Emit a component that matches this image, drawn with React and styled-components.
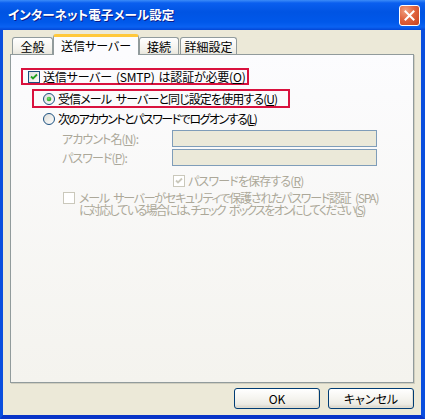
import React from 'react';
import styled, { createGlobalStyle } from 'styled-components';

const Global = createGlobalStyle`
  html, body { margin: 0; padding: 0; background: #ffffff; }
  body {
    font-family: "Noto Sans CJK JP", "Noto Sans", sans-serif;
    font-size: 12px;
    color: #000;
    font-feature-settings: "palt" 1;
  }
  #root { width: 425px; height: 419px; }
`;

const Window = styled.div`
  width: 425px;
  height: 419px;
  display: flex;
  flex-direction: column;
  overflow: hidden;
`;

const TitleBar = styled.div`
  flex: none;
  height: 30px;
  display: flex;
  align-items: center;
  justify-content: space-between;
  padding: 0 5px 0 8px;
  box-sizing: border-box;
  background: linear-gradient(
    to bottom,
    #3c8cf8 0px,
    #0a5fef 3px,
    #0054e3 12px,
    #0058ea 22px,
    #0a62f2 27px,
    #0346d6 30px
  );
`;

const Title = styled.span`
  color: #ffffff;
  font-weight: bold;
  font-size: 12.5px;
  letter-spacing: 0.1px;
  text-shadow: 1px 1px 0 #0a1c8c;
  line-height: 1;
`;

const CloseButton = styled.div`
  width: 21px;
  height: 21px;
  box-sizing: border-box;
  border: 1px solid #ffffff;
  border-radius: 3px;
  background: radial-gradient(circle at 30% 25%, #f0a080 0%, #e06540 45%, #c8401c 100%);
  display: flex;
  align-items: center;
  justify-content: center;
`;

const Frame = styled.div`
  flex: 1;
  display: flex;
  flex-direction: column;
  background: #ece9d8;
  border-left: 3px solid #0a4ede;
  border-right: 4px solid #0a4ede;
  border-bottom: 4px solid #0834c8;
  padding: 4px 7px 6px 7px;
  box-sizing: border-box;
`;

const TabStrip = styled.div`
  flex: none;
  height: 20px;
  display: flex;
  align-items: flex-end;
  padding-left: 2px;
`;

const Tab = styled.div`
  box-sizing: border-box;
  width: ${(p) => p.$w}px;
  height: ${(p) => (p.$active ? 21 : 17)}px;
  margin-left: ${(p) => p.$ml || 0}px;
  margin-bottom: ${(p) => (p.$active ? -1 : 0)}px;
  position: relative;
  z-index: ${(p) => (p.$active ? 2 : 1)};
  border: 1px solid #919b9c;
  border-bottom: none;
  border-top: ${(p) => (p.$active ? '3px solid #ffc83c' : '1px solid #919b9c')};
  border-radius: 3px 3px 0 0;
  background: ${(p) =>
    p.$active ? '#fcfcfe' : 'linear-gradient(to bottom, #ffffff, #f3f2ec 70%, #e8e6dc)'};
  display: flex;
  align-items: center;
  justify-content: center;
  padding-top: ${(p) => (p.$active ? 0 : 1)}px;
  font-size: 12px;
  line-height: 1;
  white-space: nowrap;
`;

const Panel = styled.div`
  flex: none;
  height: 329px;
  box-sizing: border-box;
  border: 1px solid #919b9c;
  box-shadow: 1px 1px 0 #d0cebf;
  background: linear-gradient(to bottom, #fcfcfe, #f4f3ee);
  padding: 13px 0 0 10px;
  display: flex;
  flex-direction: column;
  align-items: flex-start;
`;

const HighlightBox = styled.div`
  box-sizing: border-box;
  width: ${(p) => p.$w}px;
  height: ${(p) => p.$h}px;
  margin-left: ${(p) => p.$ml || 0}px;
  margin-top: ${(p) => p.$mt || 0}px;
  padding-left: ${(p) => p.$pl}px;
  border: 2px solid #d9123e;
  display: flex;
  align-items: center;
  gap: 3px;
`;

const OptionRow = styled.div`
  display: flex;
  align-items: center;
  gap: ${(p) => p.$gap || 3}px;
  height: 13px;
  margin-left: ${(p) => p.$ml || 0}px;
  margin-top: ${(p) => p.$mt || 0}px;
`;

const Text = styled.span`
  font-size: 12px;
  line-height: 1;
  white-space: nowrap;
  letter-spacing: ${(p) => p.$ls || 0}px;
  word-spacing: ${(p) => p.$ws || 0}px;
  color: ${(p) => (p.$disabled ? '#aca899' : '#000000')};
`;

const Mnemonic = styled.span`
  text-decoration: underline;
  text-underline-offset: 1px;
`;

const FieldGrid = styled.div`
  display: grid;
  grid-template-columns: 110px 205px;
  grid-auto-rows: 17px;
  row-gap: 2px;
  align-items: center;
  margin-left: 41px;
  margin-top: 5px;
`;

const Input = styled.div`
  box-sizing: border-box;
  height: 17px;
  border: 1px solid #7f9db9;
  background: #ebe9d9;
`;

const SpaRow = styled.div`
  display: flex;
  align-items: flex-start;
  gap: 4px;
  margin-left: 42px;
  margin-top: 5px;
`;

const SpaText = styled.div`
  display: flex;
  flex-direction: column;
  color: #aca899;
`;

const SpaLine = styled.div`
  font-size: 12px;
  line-height: 12px;
  height: 12px;
  letter-spacing: ${(p) => p.$ls}px;
  word-spacing: 3px;
  white-space: nowrap;
`;

const ButtonRow = styled.div`
  flex: none;
  display: flex;
  justify-content: flex-end;
  gap: 8px;
  margin-top: 5px;
`;

const Button = styled.div`
  box-sizing: border-box;
  width: 86px;
  height: 21px;
  border: 1px solid #003c74;
  border-radius: 3px;
  background: linear-gradient(to bottom, #ffffff 0%, #f5f4ef 50%, #ecebe4 80%, #d6d0c5 100%);
  box-shadow: inset -1px -1px 0 #e0ddd0;
  display: flex;
  align-items: center;
  justify-content: center;
  font-size: 12px;
  line-height: 1;
`;

const BoxSvg = styled.svg`
  flex: none;
  display: block;
`;

function CheckBox({ checked, disabled }) {
  const border = disabled ? '#cac8bb' : '#1c5180';
  const mark = disabled ? '#cac8bb' : '#21a121';
  return (
    <BoxSvg width="12" height="12" viewBox="0 0 12 12">
      <defs>
        <linearGradient id={disabled ? 'cbd' : 'cbe'} x1="0" y1="0" x2="1" y2="1">
          <stop offset="0" stopColor={disabled ? '#ffffff' : '#dcdcd7'} />
          <stop offset="1" stopColor="#ffffff" />
        </linearGradient>
      </defs>
      <rect x="0.5" y="0.5" width="11" height="11" fill={`url(#${disabled ? 'cbd' : 'cbe'})`} stroke={border} />
      {checked && (
        <polyline points="3,5.5 5,7.5 9,3.5" fill="none" stroke={mark} strokeWidth="1.8" />
      )}
    </BoxSvg>
  );
}

function Radio({ checked }) {
  return (
    <BoxSvg width="12" height="12" viewBox="0 0 12 12">
      <defs>
        <linearGradient id="rbg" x1="0" y1="0" x2="1" y2="1">
          <stop offset="0" stopColor="#dcdcd7" />
          <stop offset="1" stopColor="#ffffff" />
        </linearGradient>
        <radialGradient id="rdot" cx="0.4" cy="0.35" r="0.7">
          <stop offset="0" stopColor="#6fe06b" />
          <stop offset="1" stopColor="#21a121" />
        </radialGradient>
      </defs>
      <circle cx="6" cy="6" r="5.5" fill="url(#rbg)" stroke="#1c5180" />
      {checked && <circle cx="6" cy="6" r="2.3" fill="url(#rdot)" />}
    </BoxSvg>
  );
}

export default function App() {
  return (
    <>
      <Global />
      <Window>
        <TitleBar>
          <Title>インターネット電子メール設定</Title>
          <CloseButton>
            <svg width="11" height="11" viewBox="0 0 11 11">
              <path d="M1.5 1.5 L9.5 9.5 M9.5 1.5 L1.5 9.5" stroke="#ffffff" strokeWidth="2" strokeLinecap="square" />
            </svg>
          </CloseButton>
        </TitleBar>
        <Frame>
          <TabStrip>
            <Tab $w={41}>全般</Tab>
            <Tab $w={86} $active>送信サーバー</Tab>
            <Tab $w={40}>接続</Tab>
            <Tab $w={57} $ml={1}>詳細設定</Tab>
          </TabStrip>
          <Panel>
            <HighlightBox $w={228} $h={17} $pl={5}>
              <CheckBox checked />
              <Text $ls={-0.2} $ws={1.5}>
                送信サーバー (SMTP) は認証が必要(<Mnemonic>O</Mnemonic>)
              </Text>
            </HighlightBox>
            <HighlightBox $w={258} $h={19} $pl={9} $ml={11} $mt={4}>
              <Radio checked />
              <Text $ls={-0.9} $ws={3}>
                受信メール サーバーと同じ設定を使用する(<Mnemonic>U</Mnemonic>)
              </Text>
            </HighlightBox>
            <OptionRow $ml={22} $mt={4}>
              <Radio />
              <Text $ls={-1.5}>
                次のアカウントとパスワードでログオンする(<Mnemonic>L</Mnemonic>)
              </Text>
            </OptionRow>
            <FieldGrid>
              <Text $disabled $ls={-0.9}>
                アカウント名(<Mnemonic>N</Mnemonic>):
              </Text>
              <Input />
              <Text $disabled $ls={-0.9}>
                パスワード(<Mnemonic>P</Mnemonic>):
              </Text>
              <Input />
            </FieldGrid>
            <OptionRow $ml={152} $mt={8}>
              <CheckBox checked disabled />
              <Text $disabled $ls={-0.85}>
                パスワードを保存する(<Mnemonic>R</Mnemonic>)
              </Text>
            </OptionRow>
            <SpaRow>
              <CheckBox disabled />
              <SpaText>
                <SpaLine $ls={-1.25}>
                  メール サーバーがセキュリティで保護されたパスワード認証 (SPA)
                </SpaLine>
                <SpaLine $ls={-1.7}>
                  に対応している場合には、チェック ボックスをオンにしてください(<Mnemonic>S</Mnemonic>)
                </SpaLine>
              </SpaText>
            </SpaRow>
          </Panel>
          <ButtonRow>
            <Button>OK</Button>
            <Button>キャンセル</Button>
          </ButtonRow>
        </Frame>
      </Window>
    </>
  );
}
